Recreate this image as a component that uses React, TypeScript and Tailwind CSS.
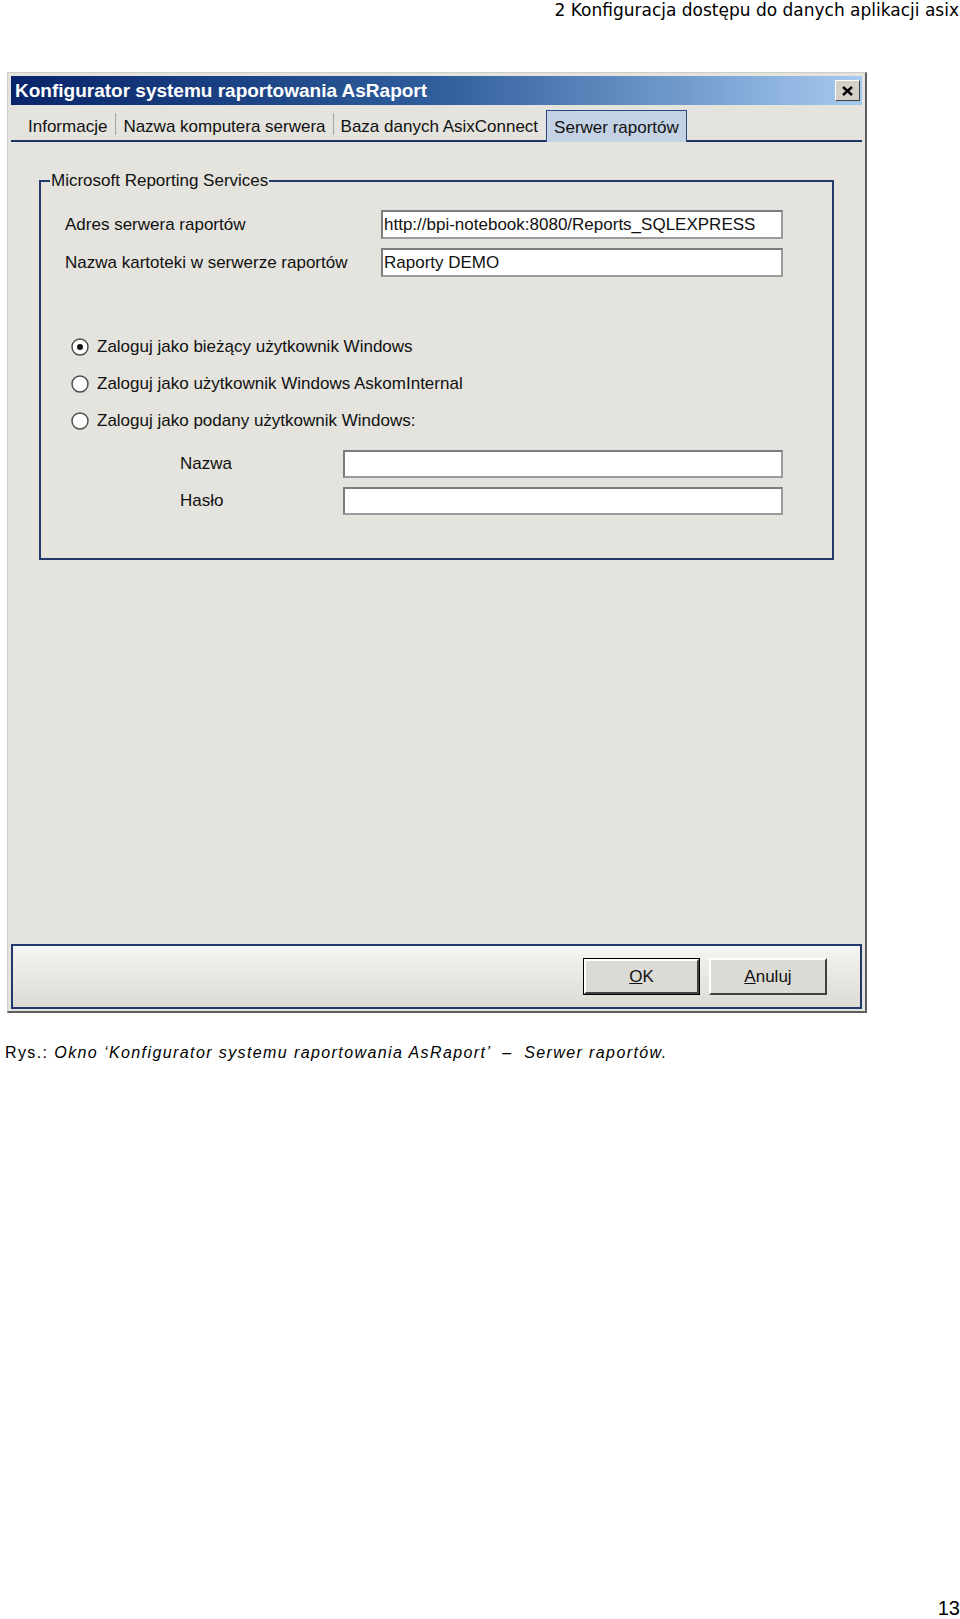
function Radio({ checked, label }: { checked?: boolean; label: string }) {
  return (
    <div className="flex items-center h-[22px] pl-[6px]">
      <svg width="18" height="18" viewBox="0 0 18 18" className="shrink-0">
        <circle cx="9" cy="9" r="8" fill="#ffffff" stroke="#4a4a4a" strokeWidth="1.4" />
        {checked && <circle cx="9" cy="9" r="3" fill="#111111" />}
      </svg>
      <span className="ml-[8px]">{label}</span>
    </div>
  );
}

function Field({ value, width, height }: { value?: string; width: string; height: string }) {
  return (
    <div
      className={`${width} ${height} bg-white border-2 border-t-[#7c7c7c] border-l-[#7c7c7c] border-r-[#9a9a9a] border-b-[#9a9a9a] pl-[1px] flex items-center leading-none whitespace-nowrap overflow-hidden`}
    >
      {value}
    </div>
  );
}

function App() {
  return (
    <div className="w-[960px] h-[1619px] bg-white flex flex-col text-black">
      {/* naglowek strony */}
      <div className="text-right pr-[1px] text-[17px] leading-[20px] font-['DejaVu_Sans',sans-serif]">
        2 Konfiguracja dostępu do danych aplikacji asix
      </div>

      {/* okno dialogowe */}
      <div className="ml-[7px] mt-[52px] w-[860px] h-[941px] flex flex-col bg-[#e4e3dd] border-l border-t border-[#cfcdc7] border-r-2 border-b-2 border-r-[#5e5e5e] border-b-[#5e5e5e] pl-[3px] pt-[3px] pr-[3px] pb-[2px] font-['Liberation_Sans',sans-serif] text-[17px] text-[#111]">
        {/* pasek tytulu */}
        <div className="h-[29px] flex items-center justify-between bg-linear-to-r from-[#0a246a] via-[#2f5e9c] to-[#a6caf0] pl-[4px] pr-[2px]">
          <span className="text-white font-bold text-[19px] leading-none">
            Konfigurator systemu raportowania AsRaport
          </span>
          <div className="w-[25px] h-[21px] bg-[#d4d0c8] border border-t-white border-l-white border-r-[#404040] border-b-[#404040] flex items-center justify-center">
            <svg width="11" height="10" viewBox="0 0 11 10">
              <path d="M1 1 L10 9 M10 1 L1 9" stroke="#000" strokeWidth="2.4" />
            </svg>
          </div>
        </div>

        {/* zakladki */}
        <div className="h-[37px] flex items-end border-b-2 border-[#1c3468]">
          <div className="h-[32px] flex items-center pt-[5px] pl-[17px] pr-[8px]">Informacje</div>
          <span className="w-px h-[22px] bg-[#a3a3a3] self-center mt-[2px]" />
          <div className="h-[32px] flex items-center pt-[5px] pl-[7px] pr-[7px]">Nazwa komputera serwera</div>
          <span className="w-px h-[22px] bg-[#a3a3a3] self-center mt-[2px]" />
          <div className="h-[32px] flex items-center pt-[5px] pl-[7px] pr-[8px]">Baza danych AsixConnect</div>
          <div className="h-[32px] -mb-[2px] relative flex items-center pt-[3px] pl-[7px] pr-[7px] bg-[#c4d2e5] border border-b-0 border-[#2b4a84]">
            Serwer raportów
          </div>
        </div>

        {/* zawartosc */}
        <div className="flex-1 pl-[28px] pt-[29px]">
          <fieldset className="w-[795px] border-2 border-[#22396b]">
            <legend className="ml-[9px] px-[1px] leading-[20px]">Microsoft Reporting Services</legend>
            <div className="pl-[24px] pb-[43px]">
              <div className="flex items-center mt-[19px]">
                <span className="w-[316px]">Adres serwera raportów</span>
                <Field value="http://bpi-notebook:8080/Reports_SQLEXPRESS" width="w-[402px]" height="h-[29px]" />
              </div>
              <div className="flex items-center mt-[9px]">
                <span className="w-[316px]">Nazwa kartoteki w serwerze raportów</span>
                <Field value="Raporty DEMO" width="w-[402px]" height="h-[29px]" />
              </div>

              <div className="mt-[59px] flex flex-col gap-[15px]">
                <Radio checked label="Zaloguj jako bieżący użytkownik Windows" />
                <Radio label="Zaloguj jako użytkownik Windows AskomInternal" />
                <Radio label="Zaloguj jako podany użytkownik Windows:" />
              </div>

              <div className="flex items-center mt-[18px] pl-[115px]">
                <span className="w-[163px]">Nazwa</span>
                <Field width="w-[440px]" height="h-[28px]" />
              </div>
              <div className="flex items-center mt-[9px] pl-[115px]">
                <span className="w-[163px]">Hasło</span>
                <Field width="w-[440px]" height="h-[28px]" />
              </div>
            </div>
          </fieldset>
        </div>

        {/* przyciski */}
        <div className="h-[65px] border-2 border-[#22396b] bg-linear-to-b from-[#f5f5f3] to-[#dcdad3] flex justify-end items-start pt-[12px] pr-[33px] gap-[9px]">
          <button className="w-[117px] h-[37px] border border-black p-0">
            <div className="h-full border-2 border-t-white border-l-white border-r-[#404040] border-b-[#404040] bg-[#dcdad4] flex items-center justify-center">
              <span><span className="underline">O</span>K</span>
            </div>
          </button>
          <button className="w-[118px] h-[37px] border-2 border-t-white border-l-white border-r-[#404040] border-b-[#404040] bg-[#dcdad4] flex items-center justify-center">
            <span><span className="underline">A</span>nuluj</span>
          </button>
        </div>
      </div>

      {/* podpis */}
      <div className="mt-[30px] pl-[5px] text-[16px] leading-[20px] tracking-[1.4px] font-['Liberation_Sans',sans-serif]">
        Rys.: <i>Okno ‘Konfigurator systemu raportowania AsRaport’ &nbsp;–&nbsp; Serwer raportów.</i>
      </div>

      <div className="mt-auto text-right text-[20px] leading-[22px] font-['Liberation_Sans',sans-serif]">13</div>
    </div>
  );
}

export default App;
